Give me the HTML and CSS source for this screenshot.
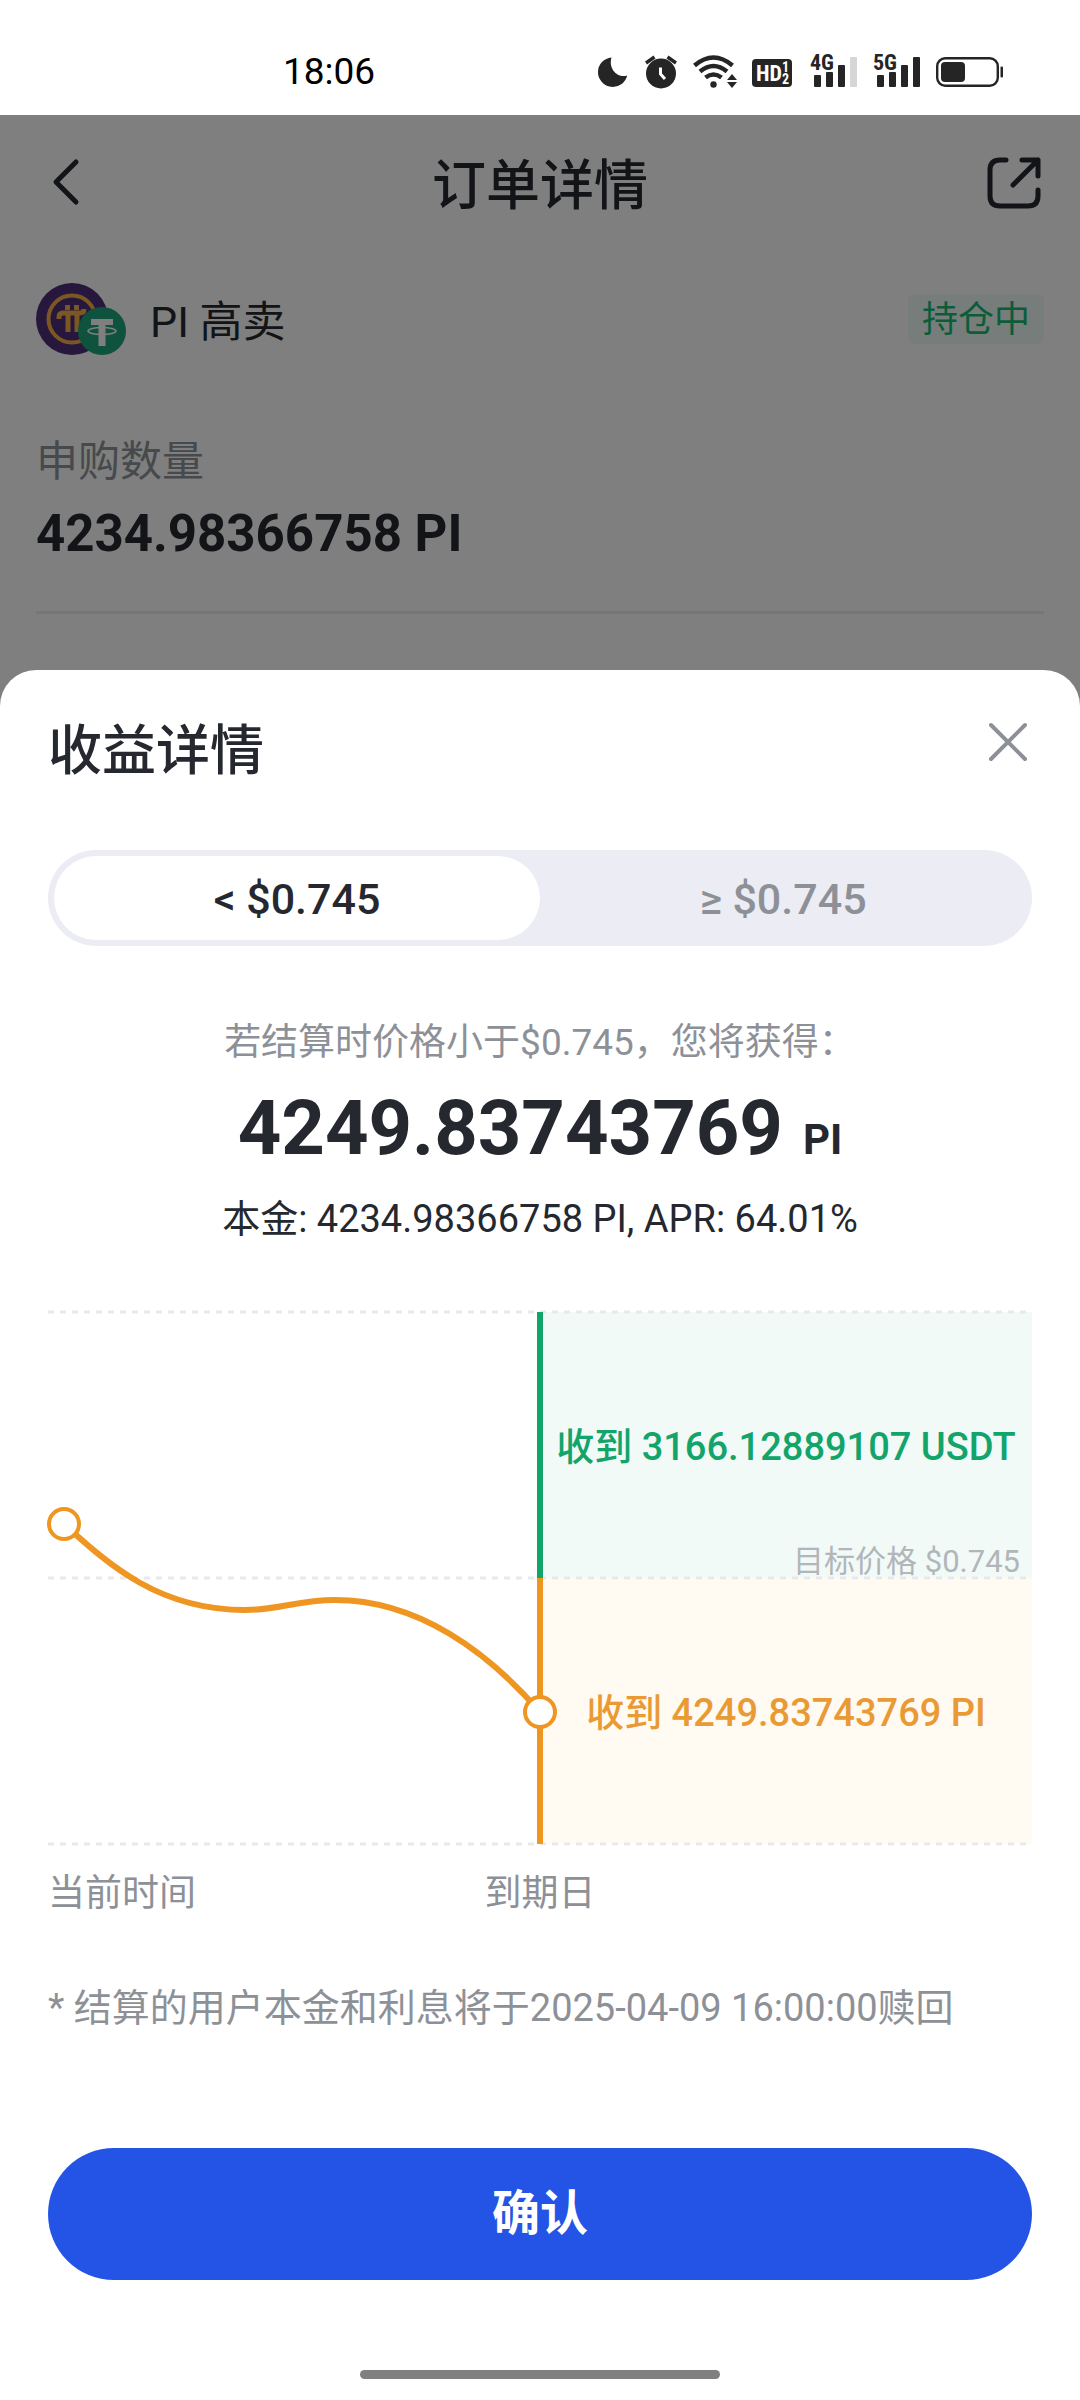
FILE: index.html
```html
<!DOCTYPE html>
<html lang="zh-CN">
<head>
<meta charset="utf-8">
<meta name="viewport" content="width=device-width, initial-scale=1">
<title>订单详情</title>
<link rel="stylesheet" href="styles.css">
</head>
<body>
<header class="status">
  <time class="status-time">18:06</time>
  <div class="status-icons">
    <svg width="30" height="36" viewBox="0 0 30 36" aria-hidden="true"><path class="ink" d="M13.5 3.4A14.8 14.8 0 1 0 29.2 21.5C20 24.5 10 15 13.5 3.4Z"/></svg>
    <svg width="32" height="36" viewBox="0 0 32 36" aria-hidden="true">
      <circle class="ink" cx="17" cy="19.5" r="15"/>
      <path class="line" stroke-width="3.4" d="M2 9 10.5 3M23.5 3 32 9"/>
      <path fill="none" stroke="#fff" stroke-width="3" d="M16.5 13.5V20l4.5 5"/>
    </svg>
    <svg width="44" height="36" viewBox="0 0 44 36" aria-hidden="true">
      <path class="line" stroke-width="4.5" d="M2.5 11.5Q21.5-4.5 40.5 11.5M8 17.5Q21.5 6.5 35 17.5M13.5 23.500Q21.5 17.5 29.5 23.5"/>
      <circle class="ink" cx="21.5" cy="30.5" r="3.2"/>
      <path class="ink" d="M40 20l5 6H35zM40 34l5-6H35z"/>
    </svg>
    <svg width="40" height="36" viewBox="0 0 40 36" role="img" aria-label="HD">
      <rect class="ink" y="5" width="40" height="28" rx="4"/>
      <text class="tiny" x="4" y="27" font-size="22" fill="#fff">HD</text>
      <text class="tiny" x="30" y="18" font-size="14" fill="#fff">1</text>
      <text class="tiny" x="30" y="30" font-size="14" fill="#fff">2</text>
    </svg>
    <svg width="49" height="36" viewBox="0 0 49 36" role="img" aria-label="4G">
      <text class="tiny ink" x="2" y="16" font-size="22">4G</text>
      <g class="ink"><rect x="6" y="21" width="7" height="12" rx="1"/><rect x="18" y="18" width="7" height="15" rx="1"/><rect x="30" y="11" width="7" height="22" rx="1"/></g>
      <rect x="42" y="3" width="7" height="30" rx="1" fill="#d6d6d6"/>
    </svg>
    <svg width="47" height="36" viewBox="0 0 47 36" role="img" aria-label="5G">
      <text class="tiny ink" x="0" y="16" font-size="22">5G</text>
      <g class="ink"><rect x="4" y="21" width="7" height="12" rx="1"/><rect x="16" y="18" width="7" height="15" rx="1"/><rect x="28" y="11" width="7" height="22" rx="1"/><rect x="40" y="3" width="7" height="30" rx="1"/></g>
    </svg>
    <svg width="67" height="36" viewBox="0 0 67 36" role="img" aria-label="电量">
      <rect class="line" x="1.2" y="4.2" width="60.6" height="27.6" rx="8" stroke-width="2.4"/>
      <rect class="ink" x="5" y="8" width="24" height="20" rx="4"/>
      <rect class="ink" x="64.5" y="12.5" width="2.5" height="11" rx="1"/>
    </svg>
  </div>
</header>

<main class="order">
  <div class="order-bar">
    <button class="icon-button" type="button" aria-label="返回"><svg width="52" height="54" viewBox="0 0 52 54"><path d="M36 4 16 24l20 20"/></svg></button>
    <h1>订单详情</h1>
    <button class="icon-button" type="button" aria-label="分享"><svg width="52" height="54" viewBox="0 0 52 54"><path d="M18 2H12Q2 2 2 12V38Q2 48 12 48H40Q50 48 50 38V32M34 2H50V18M50 2 25 27"/></svg></button>
  </div>
  <div class="product">
    <svg width="90" height="72" viewBox="0 0 90 72" aria-hidden="true">
      <circle cx="36" cy="36" r="36" fill="#4e2e78"/>
      <circle cx="36" cy="36" r="23.5" fill="none" stroke="#f4af47" stroke-width="4"/>
      <path fill="none" stroke="#f4af47" stroke-width="5" d="M23 36V34Q23 30 27 30H44Q48 30 48 26M32 30V49M41 30V49M29 24.5H34M38 24.5H43"/>
      <circle cx="66" cy="48" r="24" fill="#1ea57b"/>
      <path fill="#fff" d="M55 36H77V42H69.5V63H62.5V42H55Z"/>
      <ellipse cx="66" cy="48" rx="14" ry="3.5" fill="none" stroke="#fff" stroke-width="1.5"/>
    </svg>
    <h2>PI 高卖</h2>
    <span class="badge">持仓中</span>
  </div>
  <dl class="amount">
    <dt>申购数量</dt>
    <dd>4234.98366758 PI</dd>
  </dl>
</main>

<section class="sheet" role="dialog" aria-labelledby="sheet-title">
  <div class="sheet-head">
    <h2 id="sheet-title">收益详情</h2>
    <button class="close" type="button" aria-label="关闭"><svg width="42" height="42" viewBox="0 0 42 42"><path d="M4 4 38 38M38 4 4 38"/></svg></button>
  </div>
  <div class="segment" role="tablist">
    <button class="tab tab-active" type="button" role="tab" aria-selected="true">&lt; $0.745</button>
    <button class="tab" type="button" role="tab" aria-selected="false">≥ $0.745</button>
  </div>
  <div class="summary">
    <p class="condition">若结算时价格小于$0.745，您将获得：</p>
    <p class="payout"><strong>4249.83743769</strong><b>PI</b></p>
    <p class="principal">本金: 4234.98366758 PI, APR: 64.01%</p>
  </div>
  <div class="chart">
    <svg class="plot" viewBox="0 0 984 532" preserveAspectRatio="none" aria-hidden="true">
      <rect x="492" width="492" height="266" fill="#f1faf7"/>
      <rect x="492" y="266" width="492" height="266" fill="#fffaf2"/>
      <path class="grid" d="M0 0H984M0 266H984M0 532H984"/>
      <path stroke="#12a46a" stroke-width="6" d="M492 0V266"/>
      <path stroke="#ef9622" stroke-width="6" d="M492 266V532"/>
      <path class="trend" d="M16 212C62 254 112 298 197 298C230 298 250 288 287 288C370 288 440 340 492 400"/>
      <circle class="dot" cx="16" cy="212" r="15"/>
      <circle class="dot" cx="492" cy="400" r="15"/>
    </svg>
    <div class="zone zone-up">
      <p>收到 3166.12889107 USDT</p>
      <small>目标价格 $0.745</small>
    </div>
    <div class="zone zone-down"><p>收到 4249.83743769 PI</p></div>
  </div>
  <div class="axis"><span>当前时间</span><span>到期日</span></div>
  <p class="note">* 结算的用户本金和利息将于2025-04-09 16:00:00赎回</p>
  <button class="confirm" type="button">确认</button>
  <div class="home-bar"></div>
</section>
</body>
</html>
```
FILE: styles.css
```css
* { box-sizing: border-box; }
body, h1, h2, p, dl, dd { margin: 0; }
body {
  display: flex;
  flex-direction: column;
  min-height: 100vh;
  background: #fff;
  color: #25282e;
  font-family: Roboto, "Noto Sans CJK SC", sans-serif;
  font-size: 37px;
  line-height: 54px;
}
h1, h2 { font-weight: 500; }
button { padding: 0; border: 0; background: none; color: inherit; font: inherit; }
svg { display: block; overflow: visible; }

/* Status bar */
.status {
  display: flex;
  align-items: center;
  justify-content: space-between;
  height: 115px;
  padding: 28px 77px 0 283px;
}
.status-time { color: #000; }
.status-icons { display: flex; gap: 16px; }
.ink { fill: #252525; }
.line { fill: none; stroke: #252525; }
.tiny { font-family: "Liberation Sans Narrow", "Roboto Condensed", "Liberation Sans", sans-serif; font-weight: 700; line-height: 1; }

/* Order page, under the scrim */
.order { position: relative; padding: 40px 36px 92px; }
.order::after { content: ""; position: absolute; inset: 0; background: rgba(0, 0, 0, .5); }
.order-bar { display: flex; align-items: center; justify-content: space-between; padding: 0 4px; }
.order-bar h1 { padding-top: 4px; font-size: 54px; line-height: 56px; }
.icon-button svg { fill: none; stroke: #25282e; stroke-width: 5; stroke-linecap: round; stroke-linejoin: round; }
.product { display: flex; align-items: center; gap: 24px; margin-top: 68px; }
.product h2 { flex: 1; padding-top: 6px; font-size: 43px; font-weight: 400; }
.badge { padding: 2px 14px 0; border-radius: 6px; background: #eefaf4; color: #1bb872; font-size: 36px; line-height: 48px; }
.amount { margin-top: 77px; padding-bottom: 41px; border-bottom: 3px solid #ebecee; }
.amount dt { color: #8e9499; font-size: 42px; line-height: 60px; }
.amount dd { padding-top: 6px; font-size: 51px; font-weight: 700; line-height: 72px; }

/* Bottom sheet */
.sheet {
  position: relative;
  display: flex;
  flex: 1;
  flex-direction: column;
  margin-top: -36px;
  padding: 44px 48px 21px;
  border-radius: 36px 36px 0 0;
  background: #fff;
}
.sheet-head { display: flex; align-items: flex-start; justify-content: space-between; }
.sheet-head h2 { padding-top: 2px; font-size: 54px; line-height: 72px; }
.close { margin: 7px 3px; }
.close svg { fill: none; stroke: #8d9197; stroke-width: 4; stroke-linecap: round; }
.segment {
  display: grid;
  grid-template-columns: 1fr 1fr;
  margin-top: 62px;
  padding: 6px;
  border-radius: 48px;
  background: #ebecf4;
}
.tab { height: 84px; padding-top: 2px; border-radius: 42px; color: #8d9197; font-size: 43px; font-weight: 500; }
.tab-active { background: #fff; color: #25282e; }
.summary { margin-top: 70px; text-align: center; }
.condition { color: #8d9197; }
.payout { display: flex; align-items: baseline; justify-content: center; gap: 20px; margin-top: 4px; }
.payout strong { font-size: 76px; font-weight: 700; line-height: 108px; }
.payout b { font-size: 42px; font-weight: 700; }
.principal { margin-top: 10px; font-size: 38px; }

.chart { position: relative; display: grid; grid-template-rows: 266px 266px; margin-top: 66px; padding-left: 50%; }
.plot { position: absolute; inset: 0; width: 100%; height: 100%; }
.grid { fill: none; stroke: #e8e9eb; stroke-width: 3; stroke-dasharray: 6 6; }
.trend { fill: none; stroke: #ef9622; stroke-width: 6; }
.dot { fill: #fff; stroke: #ef9622; stroke-width: 4; }
.zone { position: relative; display: grid; place-items: center; padding-top: 4px; font-size: 38px; font-weight: 500; white-space: nowrap; }
.zone-up { color: #12a46a; }
.zone-down { color: #ea9a35; }
.zone small { position: absolute; right: 12px; bottom: 0; color: #b2b6ba; font-size: 31px; font-weight: 400; line-height: 32px; }
.axis { display: grid; grid-template-columns: 1fr auto 1fr; margin-top: 23px; color: #8d9197; }
.note { margin-top: 60px; color: #8d9197; font-size: 38px; }
.confirm { height: 132px; margin-top: 113px; border-radius: 66px; background: #2354e6; color: #fff; font-size: 48px; font-weight: 700; }
.home-bar { width: 360px; height: 9px; margin: auto auto 0; border-radius: 5px; background: #808080; }
```
